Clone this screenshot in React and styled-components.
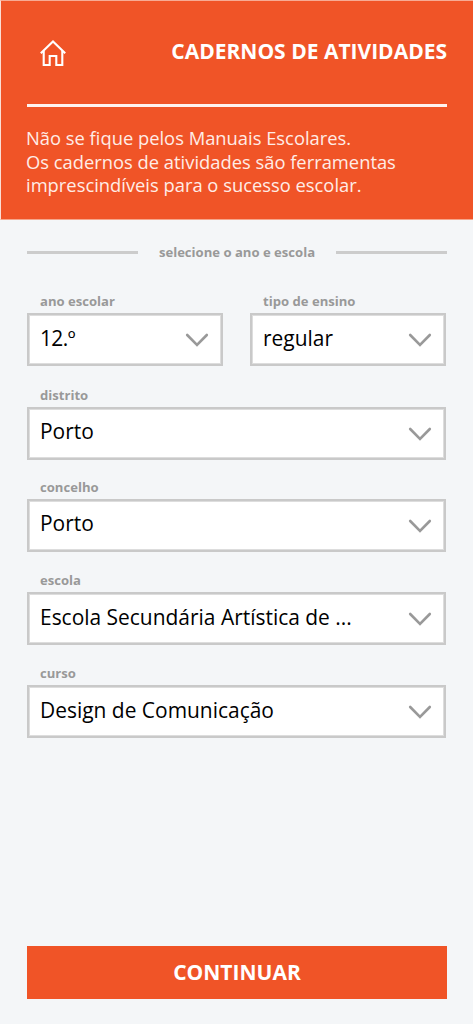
import React, { useState } from 'react';
import styled, { createGlobalStyle } from 'styled-components';

const GlobalStyle = createGlobalStyle`
  * {
    box-sizing: border-box;
  }

  body {
    margin: 0;
    background-color: #f4f6f8;
    font-family: 'Open Sans', 'Noto Sans', sans-serif;
  }
`;

const Page = styled.div`
  display: flex;
  flex-direction: column;
  height: 1024px;
  background-color: #f4f6f8;
`;

const Header = styled.header`
  height: 220px;
  padding: 0 26px 0 25px;
  border-top: 1px solid #f7ab94;
  border-left: 1px solid #fbded5;
  border-bottom: 1px solid #f5a68c;
  background-color: #f05427;
  color: #ffffff;
`;

const TopBar = styled.div`
  display: flex;
  align-items: center;
  justify-content: space-between;
  height: 106px;
  margin-left: 1px;
  border-bottom: 3px solid #fff3ef;
`;

const HomeButton = styled.button`
  display: flex;
  margin: 0 0 0 12px;
  padding: 0;
  border: none;
  background: none;
  color: #ffffff;
  cursor: pointer;
`;

const Title = styled.h1`
  margin: 0;
  padding-bottom: 3px;
  font-size: 21px;
  font-weight: 700;
  line-height: 28px;
  white-space: nowrap;
`;

const Intro = styled.p`
  margin: 19px 0 0;
  font-size: 18.35px;
  line-height: 23.6px;
  color: #ffece6;
  white-space: nowrap;
`;

const Form = styled.form`
  display: flex;
  flex: 1;
  flex-direction: column;
  padding: 21px 26px 25px 27px;
`;

const Divider = styled.div`
  display: flex;
  align-items: center;
  gap: 21px;
  height: 22px;
  margin-bottom: 28px;
  color: #999999;
  font-size: 13.1px;
  font-weight: 700;
  white-space: nowrap;

  &::before,
  &::after {
    content: '';
    flex: 1;
    height: 3px;
    background-color: #cccccc;
  }
`;

const Row = styled.div`
  display: flex;
  gap: 27px;
  padding-right: 1px;
  margin-bottom: ${props => props.$space || 18}px;
`;

const Field = styled.div`
  display: flex;
  flex: 1;
  flex-direction: column;
`;

const Label = styled.label`
  height: 22px;
  padding-left: 13px;
  color: #999999;
  font-size: 13.1px;
  font-weight: 700;
  line-height: 20px;
`;

const Select = styled.button`
  display: flex;
  align-items: center;
  justify-content: space-between;
  height: 53px;
  padding: 0 12px 0 11px;
  border: 2px solid #c9c9c9;
  box-shadow: inset 0 0 0 1px #dddddd;
  background-color: #ffffff;
  color: #000000;
  font-family: inherit;
  font-size: 20.95px;
  text-align: left;
  white-space: nowrap;
  cursor: pointer;
`;

const Value = styled.span`
  padding-bottom: ${props => (props.$raised ? 6 : 4)}px;
  letter-spacing: ${props => (props.$tight ? '-0.6px' : 'normal')};
`;

const Submit = styled.button`
  height: 53px;
  margin-top: auto;
  padding: 0 0 2px;
  border: none;
  background-color: #f05427;
  color: #ffffff;
  font-family: inherit;
  font-size: 21px;
  font-weight: 700;
  cursor: pointer;
`;

const HomeIcon = () => (
  <svg width="28" height="28" viewBox="0 0 28 28" fill="none" stroke="currentColor" strokeWidth="2.1">
    <path d="M1.8 14.3L14 2.4L26.2 14.3" />
    <path d="M4.7 12V26H10.7V17H17.3V26H23.3V12" />
  </svg>
);

const ChevronIcon = () => (
  <svg width="24" height="14" viewBox="0 0 24 14" fill="none" stroke="#999999" strokeWidth="2.6" strokeLinecap="round">
    <path d="M2.2 2L12 11.8L21.8 2" />
  </svg>
);

const SelectField = ({ id, label, value, tight, raised }) => (
  <Field>
    <Label htmlFor={id}>{label}</Label>
    <Select id={id} type="button">
      <Value $tight={tight} $raised={raised}>{value}</Value>
      <ChevronIcon />
    </Select>
  </Field>
);

const rows = [
  {
    space: 19,
    fields: [
      { id: 'ano', label: 'ano escolar', value: '12.º', tight: true },
      { id: 'ensino', label: 'tipo de ensino', value: 'regular' },
    ],
  },
  { space: 17, fields: [{ id: 'distrito', label: 'distrito', value: 'Porto', raised: true }] },
  { fields: [{ id: 'concelho', label: 'concelho', value: 'Porto', raised: true }] },
  { fields: [{ id: 'escola', label: 'escola', value: 'Escola Secundária Artística de ...' }] },
  { fields: [{ id: 'curso', label: 'curso', value: 'Design de Comunicação' }] },
];

const App = () => {
  const [formRows] = useState(rows);

  return (
    <Page>
      <GlobalStyle />
      <Header>
        <TopBar>
          <HomeButton aria-label="Início">
            <HomeIcon />
          </HomeButton>
          <Title>CADERNOS DE ATIVIDADES</Title>
        </TopBar>
        <Intro>
          Não se fique pelos Manuais Escolares.
          <br />
          Os cadernos de atividades são ferramentas
          <br />
          imprescindíveis para o sucesso escolar.
        </Intro>
      </Header>

      <Form onSubmit={(e) => e.preventDefault()}>
        <Divider>selecione o ano e escola</Divider>
        {formRows.map((row, index) => (
          <Row key={index} $space={row.space}>
            {row.fields.map((field) => (
              <SelectField key={field.id} {...field} />
            ))}
          </Row>
        ))}
        <Submit type="submit">CONTINUAR</Submit>
      </Form>
    </Page>
  );
};

export default App;
